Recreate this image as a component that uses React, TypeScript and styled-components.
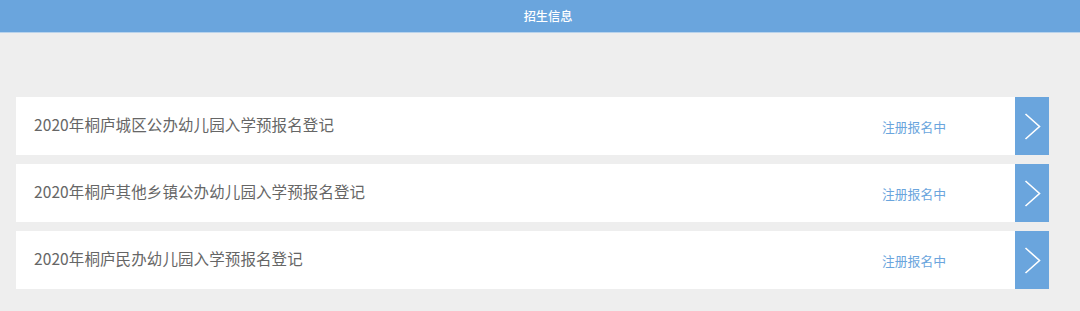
import styled, { createGlobalStyle } from 'styled-components'

const GlobalStyle = createGlobalStyle`
  html, body {
    margin: 0;
    padding: 0;
    background: #eeeeee;
    font-family: "Noto Sans CJK SC", "Noto Sans", "Liberation Sans", sans-serif;
  }
`

const Page = styled.div`
  width: 1080px;
  min-height: 311px;
  background: #eeeeee;
`

const Header = styled.div`
  height: 32px;
  background: #6aa5dd;
  border-bottom: 1px solid #b9d3ec;
  display: flex;
  align-items: center;
  justify-content: center;
  padding-left: 16px;
  color: #ffffff;
  font-size: 12.2px;
  font-weight: 500;
`

const List = styled.ul`
  list-style-type: none;
  margin: 0;
  padding: 64px 31px 0 16px;
  display: flex;
  flex-direction: column;
  gap: 9px;
`

const Row = styled.li`
  height: 58px;
  background: #ffffff;
  display: flex;
  align-items: center;
`

const Title = styled.span`
  flex-grow: 1;
  padding-left: 18px;
  padding-bottom: 4px;
  color: #666666;
  font-size: 15.5px;
  letter-spacing: 0.1px;
`

const Status = styled.span`
  width: 133px;
  color: #6aa5dd;
  font-size: 12.8px;
  padding-top: 1px;
`

const ArrowBox = styled.div`
  width: 34px;
  height: 58px;
  background: #6aa5dd;
  display: flex;
  align-items: center;
  justify-content: center;
`

const items = [
  '2020年桐庐城区公办幼儿园入学预报名登记',
  '2020年桐庐其他乡镇公办幼儿园入学预报名登记',
  '2020年桐庐民办幼儿园入学预报名登记',
]

export default function App() {
  return (
    <Page>
      <GlobalStyle />
      <Header>招生信息</Header>
      <List>
        {items.map(item => (
          <Row key={item}>
            <Title>{item}</Title>
            <Status>注册报名中</Status>
            <ArrowBox>
              <svg width="17" height="27" viewBox="0 0 17 27">
                <polyline points="1.5,1 15.5,13.5 1.5,26" fill="none" stroke="#ffffff" strokeWidth="1.6" />
              </svg>
            </ArrowBox>
          </Row>
        ))}
      </List>
    </Page>
  )
}
